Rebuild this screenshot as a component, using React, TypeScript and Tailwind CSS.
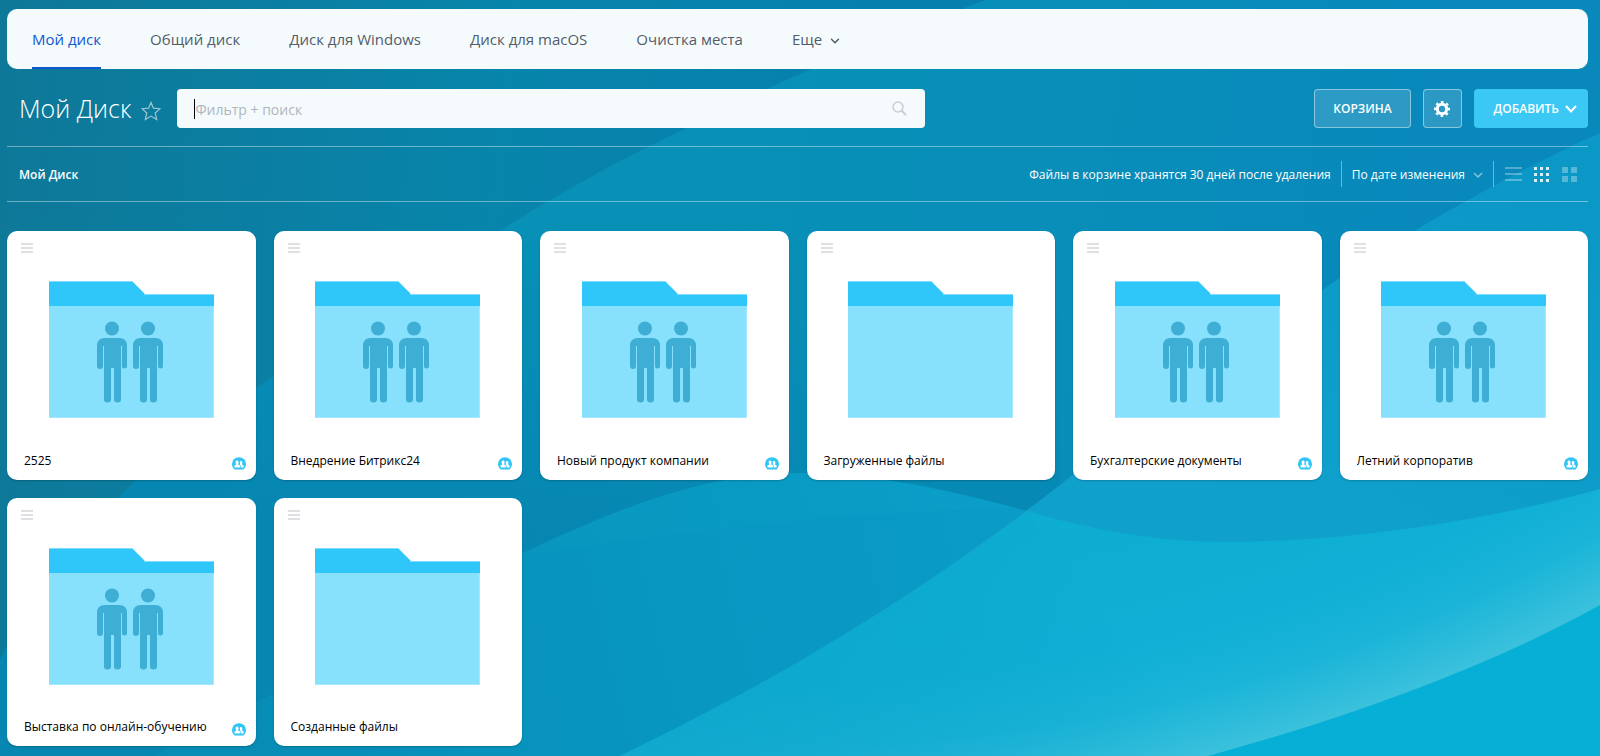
import { ChevronDown } from "lucide-react";

type Folder = { name: string; shared: boolean };

const tabs = ["Мой диск", "Общий диск", "Диск для Windows", "Диск для macOS", "Очистка места"];

const folders: Folder[] = [
  { name: "2525", shared: true },
  { name: "Внедрение Битрикс24", shared: true },
  { name: "Новый продукт компании", shared: true },
  { name: "Загруженные файлы", shared: false },
  { name: "Бухгалтерские документы", shared: true },
  { name: "Летний корпоратив", shared: true },
  { name: "Выставка по онлайн-обучению", shared: true },
  { name: "Созданные файлы", shared: false },
];

function Backdrop() {
  return (
    <svg
      className="absolute inset-0 -z-10 h-full w-full"
      viewBox="0 0 1600 756"
      preserveAspectRatio="none"
      aria-hidden="true"
    >
      <defs>
        <linearGradient id="base" gradientUnits="userSpaceOnUse" x1="0" y1="100" x2="1000" y2="200">
          <stop offset="0" stopColor="#0e7898" />
          <stop offset="0.5" stopColor="#0885ab" />
          <stop offset="0.85" stopColor="#067fae" />
          <stop offset="1" stopColor="#067fae" />
        </linearGradient>
        <linearGradient id="ridge" gradientUnits="userSpaceOnUse" x1="700" y1="100" x2="1420" y2="200">
          <stop offset="0" stopColor="#0890b6" />
          <stop offset="0.5" stopColor="#088eb9" />
          <stop offset="1" stopColor="#0888bb" />
        </linearGradient>
        <linearGradient id="shade" gradientUnits="userSpaceOnUse" x1="600" y1="230" x2="560" y2="540">
          <stop offset="0" stopColor="#0687b2" stopOpacity="0" />
          <stop offset="1" stopColor="#0687b2" />
        </linearGradient>
        <linearGradient id="right" gradientUnits="userSpaceOnUse" x1="1500" y1="180" x2="1300" y2="540">
          <stop offset="0" stopColor="#0c98c7" />
          <stop offset="1" stopColor="#0fa1cc" />
        </linearGradient>
        <linearGradient id="mid" gradientUnits="userSpaceOnUse" x1="250" y1="700" x2="1000" y2="520">
          <stop offset="0" stopColor="#088cb4" />
          <stop offset="0.5" stopColor="#0898c0" />
          <stop offset="1" stopColor="#0b9ec8" />
        </linearGradient>
        <radialGradient id="wave" gradientUnits="userSpaceOnUse" cx="748" cy="-1022" r="1837">
          <stop offset="0.84" stopColor="#0cadd0" />
          <stop offset="0.93" stopColor="#10afd5" />
          <stop offset="0.965" stopColor="#1ab4d8" />
          <stop offset="1" stopColor="#3bc1dc" />
        </radialGradient>
        <linearGradient id="fade" gradientUnits="userSpaceOnUse" x1="620" y1="756" x2="1150" y2="600">
          <stop offset="0" stopColor="#0a9fc5" stopOpacity="0.6" />
          <stop offset="1" stopColor="#0a9fc5" stopOpacity="0" />
        </linearGradient>
      </defs>
      <rect width="1600" height="756" fill="url(#base)" />
      <path
        d="M985 0 C920 25 870 45 812 69 S700 122 650 146 S560 195 533 210 C430 275 330 340 250 392 C160 450 60 540 0 660 V756 H1600 V0Z"
        fill="url(#ridge)"
      />
      <path
        d="M812 230 H500 C430 275 330 340 250 392 C160 450 60 540 0 660 V756 H1000 L1060 485 V230Z"
        fill="url(#shade)"
      />
      <path
        d="M0 830 C200 740 370 640 523 553 C610 512 700 473 800 473 C880 473 960 493 1027 511 L1000 756 H0Z"
        fill="url(#mid)"
      />
      <path d="M523 556 C700 528 850 512 1027 508 L900 756 H160 C300 690 420 620 523 556Z" fill="#0490c0" opacity=".15" />
      <path
        d="M1600 133 C1540 160 1490 187 1436 218 C1390 245 1350 270 1320 292 C1230 350 1130 430 1060 485 C940 578 800 670 620 756 H1600Z"
        fill="url(#right)"
      />
      <path d="M1027 511 C1090 530 1160 542 1225 542 C1350 542 1490 520 1600 489 V756 H620 C790 674 915 595 1027 511Z" fill="url(#wave)" />
      <path d="M1027 511 L1200 756 H620 C790 674 915 595 1027 511Z" fill="url(#fade)" />
      <path d="M1600 605 C1490 666 1360 714 1208 756 H1600Z" fill="#05afd6" />
    </svg>
  );
}

function Person({ x }: { x: number }) {
  return (
    <g transform={`translate(${x} 0)`} fill="#3eaed5">
      <circle cx="15" cy="47.500" r="7" />
      <path d="M8 57H22Q30 57 30 65V85Q30 87.500 27.500 87.500T25 85V65H24V118.500Q24 121.500 20.500 121.500T17 118.500V87H14V118.500Q14 121.500 10.500 121.500T7 118.500V65H6V85Q6 88 3 88T0 85V65Q0 57 8 57Z" />
    </g>
  );
}

function FolderArt({ shared }: { shared: boolean }) {
  return (
    <svg className="h-[137px] w-[165px]" viewBox="0 0 165 137" aria-hidden="true">
      <path d="M0 0H83L96 13H165V27H0Z" fill="#2fc6f9" />
      <path d="M0 25H165V137H0Z" fill="#87e0fc" />
      <path d="M0 .5H83M95 13.500H165M0 136.500H165M164.500 26V137" stroke="#b5edff" strokeWidth="1" fill="none" opacity=".6" />
      {shared && (
        <>
          <Person x={48} />
          <Person x={84} />
        </>
      )}
    </svg>
  );
}

function SharedBadge() {
  return (
    <svg className="h-[14px] w-[14px] shrink-0 self-end" viewBox="0 0 14 14" role="img" aria-label="Общий доступ">
      <path d="M2.500 12.500A7 7 0 1 1 11.500 12.500Z" fill="#2fc6f6" />
      <path d="M5 3.500C6.300 3.500 6.800 4.500 6.500 6L6.200 7.500L8 8.500V10.500H2.500V8.500L4.200 7.500L3.700 6C3.400 4.500 3.800 3.500 5 3.500Z" fill="#fff" />
      <path d="M9 4C10.200 4 10.600 5 10.300 6.200L10 7.500L11.600 8.500V10.500H8.600V8.200L7.800 7.600L8 6.500C7.400 5 7.900 4 9 4Z" fill="#fff" />
    </svg>
  );
}

function FolderCard({ name, shared }: Folder) {
  return (
    <li className="relative flex aspect-square flex-col items-center rounded-[10px] bg-white pt-[50px] shadow-[0_1px_2px_rgba(0,0,0,0.2)]">
      <button type="button" aria-label="Меню" className="absolute left-[14px] top-3 flex flex-col gap-[2px]">
        <span className="h-[2px] w-3 bg-[#dfe0e3]" />
        <span className="h-[2px] w-3 bg-[#dfe0e3]" />
        <span className="h-[2px] w-3 bg-[#dfe0e3]" />
      </button>
      <FolderArt shared={shared} />
      <div className="mt-auto flex w-full items-center justify-between pb-[9px] pl-[17px] pr-[10px]">
        <a href="#" className="truncate text-[12px] leading-5 text-black">
          {name}
        </a>
        {shared && <SharedBadge />}
      </div>
    </li>
  );
}

export default function App() {
  return (
    <div className="relative isolate flex min-h-screen flex-col overflow-hidden pb-[10px] pl-[7px] pr-3 pt-[9px] font-['Open_Sans','Noto_Sans',sans-serif]">
      <Backdrop />

      <nav className="flex h-[60px] gap-[49px] rounded-[10px] bg-[#f5fbfd] px-[25px] text-[15px] text-[#525c69]">
        {tabs.map((tab, i) => (
          <a
            key={tab}
            href="#"
            className={
              i === 0
                ? "flex items-center border-b-2 border-[#1058d0] pt-[2px] text-[#1058d0]"
                : "flex items-center"
            }
          >
            {tab}
          </a>
        ))}
        <button type="button" className="flex items-center gap-[6px]">
          Еще
          <ChevronDown className="mt-1 h-[14px] w-[14px]" strokeWidth={2.5} />
        </button>
      </nav>

      <header className="mt-5 flex items-center pl-3">
        <h1 className="pb-[2px] text-[25px] font-light leading-9 text-white">Мой Диск</h1>
        <button type="button" aria-label="В избранное" className="ml-[10px] mt-1">
          <svg className="h-5 w-5" viewBox="0 0 20 20" fill="none" stroke="#9cc6d4" strokeWidth="1.200">
            <path d="M10 1.500L12.400 7.200L19 7.700L14.200 12L15.700 18.500L10 15.100L4.300 18.500L5.800 12L1 7.700L7.600 7.200Z" />
          </svg>
        </button>
        <label className="ml-4 flex h-[39px] w-[748px] items-center rounded bg-[#f5fbfd] pl-[17px] pr-[18px]">
          <span className="h-5 w-px bg-black" />
          <input
            type="text"
            aria-label="Фильтр и поиск"
            placeholder="Фильтр + поиск"
            className="min-w-0 flex-1 bg-transparent pt-px text-[14px] text-[#525c69] outline-none placeholder:text-[#afb5bd]"
          />
          <svg className="h-[15px] w-[15px]" viewBox="0 0 15 15" fill="none" stroke="#c8ced3" strokeWidth="1.500" aria-hidden="true">
            <circle cx="6" cy="6" r="5" />
            <path d="M9.500 9.500L14 14" strokeWidth="2" />
          </svg>
        </label>
        <div className="ml-auto flex gap-3 text-[12px] font-semibold text-white">
          <button type="button" className="h-[39px] rounded border border-white/45 bg-white/15 px-[18px]">
            КОРЗИНА
          </button>
          <button
            type="button"
            aria-label="Настройки"
            className="flex h-[39px] w-[39px] items-center justify-center rounded border border-white/45 bg-white/15"
          >
            <svg className="h-4 w-4" viewBox="0 0 16 16" fill="none" stroke="#fff">
              <circle cx="8" cy="8" r="4.700" strokeWidth="3" />
              <circle cx="8" cy="8" r="7" strokeWidth="2" strokeDasharray="2.750 2.748" strokeDashoffset="1.375" />
            </svg>
          </button>
          <button type="button" className="flex h-[39px] items-center gap-[6px] rounded bg-[#3bc8f5] pl-5 pr-[11px]">
            ДОБАВИТЬ
            <svg className="h-3 w-3" viewBox="0 0 12 12" fill="none" stroke="#fff" strokeWidth="2">
              <path d="M1 3L6 8.500L11 3" />
            </svg>
          </button>
        </div>
      </header>

      <div className="mt-[18px] flex h-14 items-center border-y border-white/40 pl-3 pr-[10px] text-[12px] font-semibold leading-5 text-white">
        <span className="pt-[2px]">Мой Диск</span>
        <span className="ml-auto border-r border-white/40 pb-[2px] pr-[10px] pt-1 font-medium">
          Файлы в корзине хранятся 30 дней после удаления
        </span>
        <button type="button" className="flex items-center gap-2 border-r border-white/40 pb-[2px] pl-[10px] pr-[10px] pt-1 font-medium">
          По дате изменения
          <svg className="h-[10px] w-[10px]" viewBox="0 0 10 10" fill="none" stroke="#fff" strokeWidth="1.500" opacity=".5">
            <path d="M1 3L5 7L9 3" />
          </svg>
        </button>
        <div className="ml-[10px] flex gap-[10px]">
          <button type="button" aria-label="Список">
            <svg className="h-[18px] w-[18px]" viewBox="0 0 18 18" fill="#fff" opacity=".3">
              <path d="M1 2H18V4H1ZM1 8H18V10H1ZM1 14H18V16H1Z" />
            </svg>
          </button>
          <button type="button" aria-label="Сетка">
            <svg className="h-[18px] w-[18px]" viewBox="0 0 18 18" fill="#fff" opacity=".85">
              <path d="M2 2h3v3H2ZM8 2h3v3H8ZM14 2h3v3H14ZM2 8h3v3H2ZM8 8h3v3H8ZM14 8h3v3H14ZM2 14h3v3H2ZM8 14h3v3H8ZM14 14h3v3H14Z" />
            </svg>
          </button>
          <button type="button" aria-label="Плитка">
            <svg className="h-[18px] w-[18px]" viewBox="0 0 18 18" fill="#fff" opacity=".3">
              <path d="M2 2h6v6H2ZM11 2h6v6H11ZM2 11h6v6H2ZM11 11h6v6H11Z" />
            </svg>
          </button>
        </div>
      </div>

      <ul className="mt-[29px] grid grid-cols-6 gap-[18px]">
        {folders.map((folder) => (
          <FolderCard key={folder.name} {...folder} />
        ))}
      </ul>
    </div>
  );
}
